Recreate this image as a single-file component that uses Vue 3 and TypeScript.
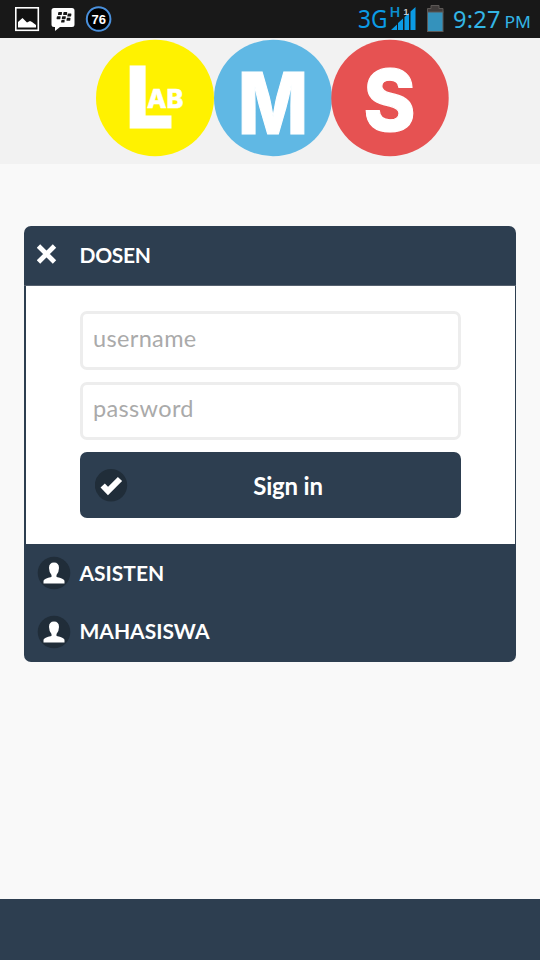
<script setup lang="ts">
import { ref } from 'vue'

const username = ref('')
const password = ref('')
const roles: string[] = ['ASISTEN', 'MAHASISWA']
</script>

<template>
  <div class="screen">
    <div class="status">
      <svg class="notifications" width="180" height="38" viewBox="0 0 180 38">
        <rect x="15.8" y="7.8" width="22.5" height="22.5" fill="#111" stroke="#fff" stroke-width="1.6" />
        <path d="M18 27.5V22l4.500-4 4.500 4.500 3-1.500 2 1 4 3v2.500z" fill="#fff" />
        <path d="M54 8h18q2.500 0 2.500 2.500v14q0 2.500-2.500 2.500H60l-5 4v-4h-1q-2.500 0-2.500-2.500v-14Q51.500 8 54 8z" fill="#fff" />
        <g fill="#181818" transform="skewX(-8)">
          <rect x="60" y="12" width="3.800" height="3" rx=".6" />
          <rect x="65.200" y="12" width="3.800" height="3" rx=".6" />
          <rect x="59.200" y="16.200" width="3.800" height="3" rx=".6" />
          <rect x="64.400" y="16.200" width="3.800" height="3" rx=".6" />
          <rect x="69.600" y="13.600" width="3.800" height="3" rx=".6" />
          <rect x="64.200" y="20" width="3.400" height="2.600" rx=".6" />
          <rect x="69.300" y="17.800" width="3.800" height="3" rx=".6" />
        </g>
        <circle cx="98.600" cy="19" r="11.800" fill="#000" stroke="#4a90dc" stroke-width="2" />
        <text x="98.800" y="23.800" text-anchor="middle" class="badge">76</text>
      </svg>
      <svg class="system" width="190" height="38" viewBox="0 0 190 38">
        <text x="8" y="27.700" class="network" textLength="29.500" lengthAdjust="spacingAndGlyphs">3G</text>
        <text x="39.600" y="17.200" class="hspa" textLength="11" lengthAdjust="spacingAndGlyphs">H</text>
        <path d="M41 30l6-5.500V30zM48 30v-7l5-4.500V30zM54.500 30V17l4.500-4v17zM60.500 30V11.500L65.500 7v23z" fill="#0b9be5" />
        <text x="53.500" y="14.500" class="sim">1</text>
        <path d="M81 5.500h8V8.500h4v4H77.500v-4H81z" fill="#403c3b" stroke="#5c5856" />
        <rect x="77.500" y="12" width="15.500" height="19.500" fill="#3492bc" stroke="#5c5856" />
        <text x="103" y="27.800" class="clock" textLength="47.500">9:27</text>
        <text x="154.500" y="27.800" class="meridiem" textLength="26.500" lengthAdjust="spacingAndGlyphs">PM</text>
      </svg>
    </div>

    <header class="brand">
      <svg width="354" height="126" viewBox="0 0 354 126">
        <ellipse cx="59" cy="60" rx="59" ry="58.200" fill="#fff200" />
        <ellipse cx="177" cy="60" rx="59" ry="58.200" fill="#60b8e4" />
        <ellipse cx="294" cy="60" rx="58.700" ry="58.200" fill="#e65252" />
        <g class="logo-text">
          <text x="29.500" y="89.500" font-size="85">L<tspan x="51" y="69.500" font-size="26" stroke-width=".5" textLength="36.500" lengthAdjust="spacingAndGlyphs">AB</tspan></text>
          <text x="142" y="95.500" font-size="85" textLength="70" lengthAdjust="spacingAndGlyphs">M</text>
          <text x="267.500" y="92.500" font-size="85" textLength="52" lengthAdjust="spacingAndGlyphs">S</text>
        </g>
      </svg>
    </header>

    <main class="content">
      <section class="accordion">
        <div class="row heading">
          <svg class="close" width="34" height="34" viewBox="0 0 34 34">
            <path d="M1.500 8L17.500 24M17.500 8L1.500 24" stroke="#fff" stroke-width="4.800" />
          </svg>
          <span>DOSEN</span>
        </div>
        <form class="panel" @submit.prevent>
          <input v-model="username" class="field" type="text" placeholder="username" />
          <input v-model="password" class="field second" type="password" placeholder="password" />
          <button class="submit" type="submit">
            <svg class="check" width="33" height="33" viewBox="0 0 33 33">
              <circle cx="16" cy="16.200" r="16.200" fill="#202d39" />
              <path d="M7.700 16.500l5.300 5.500L25 10" fill="none" stroke="#fff" stroke-width="6" />
            </svg>
            <span>Sign in</span>
          </button>
        </form>
        <div v-for="role in roles" :key="role" class="row">
          <svg class="avatar" width="34" height="34" viewBox="0 0 34 34">
            <circle cx="17" cy="17" r="16.300" fill="#202d39" />
            <path d="M6.500 27.500v-2.700q.5-2.300 8-3.800v-2q-2.500-3-2.500-7Q12 6.500 17 6.500T22 12q0 4-2.500 7v2q7.500 1.500 8 3.800v2.700z" fill="#fff" />
          </svg>
          <span>{{ role }}</span>
        </div>
      </section>
    </main>
    <footer class="footer"></footer>
  </div>
</template>

<style>
body {
  background: #f9f9f9;
}
</style>

<style scoped>
.screen {
  width: 540px;
  height: 960px;
  display: flex;
  flex-direction: column;
  background: #f9f9f9;
  font-family: Lato, sans-serif;
  overflow: hidden;
}
.status {
  display: flex;
  justify-content: space-between;
  height: 38px;
  flex: none;
  background: #181818;
}
svg {
  display: block;
  flex: none;
}
.badge {
  font: bold 13px "Liberation Sans", sans-serif;
  fill: #fff;
}
.network {
  font: 25px "Noto Sans", sans-serif;
  fill: #0b9be5;
}
.hspa {
  font: 600 14px "Noto Sans", sans-serif;
  fill: #0b8fd0;
}
.sim {
  font: bold 9px "Liberation Sans", sans-serif;
  fill: #ccc;
}
.clock {
  font: 23.5px "Noto Sans", sans-serif;
  fill: #33b5e5;
}
.meridiem {
  font: 16.5px "Noto Sans", sans-serif;
  fill: #33b5e5;
}
.brand {
  height: 126px;
  flex: none;
  padding-left: 96px;
  background: #f2f2f2;
}
.logo-text {
  font-family: Inter, sans-serif;
  font-weight: 800;
  fill: #fff;
  stroke: #fff;
  stroke-width: 1.2;
}
.content {
  flex: 1;
  padding: 62px 24px 0;
}
.accordion {
  height: 436px;
  box-sizing: border-box;
  border-radius: 7px;
  background: #2d3e50;
  overflow: hidden;
}
.row {
  height: 58.5px;
  box-sizing: border-box;
  padding-left: 13px;
  display: flex;
  align-items: center;
  gap: 9px;
  color: #fff;
  font-size: 21px;
  font-weight: 700;
}
.row span {
  margin: -2px 0 0 -0.5px;
}
.heading {
  height: 60px;
  border-bottom: 1px solid #56616f;
}
.heading span {
  letter-spacing: -0.3px;
}
.close {
  margin-top: -2px;
}
.panel {
  height: 258px;
  box-sizing: border-box;
  margin: 0 1px 0 2px;
  padding: 25px 54px 26px;
  display: flex;
  flex-direction: column;
  background: #fff;
}
.field {
  height: 59px;
  width: 381px;
  box-sizing: border-box;
  margin: 0;
  padding: 0 10px 6px;
  border: 3px solid #ededed;
  border-radius: 7px;
  background: #fff;
  font: 23.5px Lato, sans-serif;
  letter-spacing: 0.35px;
  color: #444;
  outline: none;
}
.second {
  height: 58px;
  margin-top: 12px;
}
.field::placeholder {
  color: #aaa;
  opacity: 1;
}
.submit {
  width: 381px;
  height: 66px;
  margin: 12px 0 0;
  padding: 0 13px 0 15px;
  display: flex;
  align-items: center;
  border: 0;
  border-radius: 7px;
  background: #2d3e50;
  color: #fff;
  font: 700 24px Lato, sans-serif;
  letter-spacing: -0.2px;
}
.submit span {
  flex: 1;
  text-align: center;
}
.footer {
  height: 61px;
  flex: none;
  background: #2d3e50;
}
</style>
